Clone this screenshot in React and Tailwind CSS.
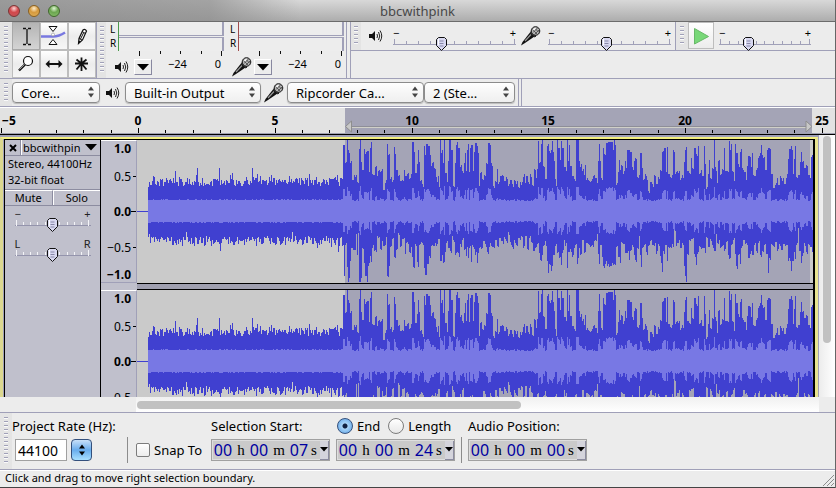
import { useState } from "react";
import clsx from "clsx";

// [column, height above zero, height below zero], in thirds of a pixel
const TOP_POINTS = [
  [0, 94], [9, 199], [15, 144], [21, 214], [24, 179], [30, 149], [36, 94], [42, 109], [51, 89], [57, 186],
  [60, 214], [63, 149], [66, 124], [72, 186], [75, 174], [84, 179], [87, 116], [90, 189], [93, 206], [96, 106],
  [102, 104], [105, 129], [111, 109], [114, 119], [120, 122], [126, 122], [129, 66], [135, 89], [141, 202],
  [144, 172], [150, 99], [156, 89], [162, 192], [165, 174], [168, 126], [174, 109], [180, 94], [186, 89],
  [192, 124], [195, 109], [201, 111], [207, 94], [213, 109], [216, 208], [222, 172], [225, 116], [231, 144],
  [234, 184], [237, 144], [240, 96], [246, 76], [252, 196], [255, 169], [258, 202], [264, 194], [270, 166],
  [273, 134], [276, 149], [282, 129], [288, 104], [291, 84], [294, 104], [297, 76], [300, 212], [303, 179],
  [309, 149], [312, 214], [315, 114], [321, 92], [324, 146], [327, 214], [333, 184], [339, 74], [345, 144],
  [348, 199], [351, 208], [354, 189], [360, 136], [366, 116], [372, 149], [375, 179], [378, 124], [381, 182],
  [384, 202], [387, 114], [390, 189], [393, 199], [399, 119], [402, 174], [405, 204], [411, 194], [414, 172],
  [417, 79], [420, 112], [426, 94], [432, 109], [438, 146], [444, 204], [450, 199], [453, 146], [456, 129],
  [459, 74], [465, 94], [471, 121], [474, 84], [480, 104], [486, 109], [492, 94], [498, 99], [504, 79],
  [510, 89], [516, 76], [522, 92], [528, 84], [534, 71], [540, 84], [549, 106], [555, 79], [558, 104],
  [564, 82], [570, 104], [576, 79], [582, 122], [588, 94], [591, 124], [594, 211], [597, 149], [603, 202],
  [606, 214], [609, 134], [615, 99], [621, 194], [624, 202], [627, 179], [633, 184], [636, 209], [639, 174],
  [642, 154], [645, 94], [648, 79], [651, 214], [654, 189], [660, 149], [663, 211], [666, 189], [672, 129],
  [678, 114], [681, 214], [684, 149], [687, 199], [690, 134], [696, 109], [702, 94], [708, 214], [714, 214],
  [717, 144], [720, 139], [726, 124], [732, 109], [735, 144], [738, 94], [744, 89], [756, 94], [759, 109],
  [765, 94], [771, 89], [774, 154], [777, 202], [780, 149], [783, 94], [789, 189], [792, 174], [798, 204],
  [804, 206], [816, 206], [819, 182], [822, 212], [825, 199], [828, 84], [834, 119], [837, 149], [840, 119],
  [843, 139], [849, 114], [855, 152], [858, 124], [861, 182], [867, 184], [870, 174], [876, 129], [882, 154],
  [888, 159], [891, 104], [897, 109], [900, 176], [903, 179], [906, 129], [909, 99], [915, 106], [921, 94],
  [924, 61], [930, 94], [936, 76], [942, 109], [948, 79], [954, 99], [960, 119], [966, 174], [972, 189],
  [978, 114], [981, 192], [984, 114], [990, 99], [996, 104], [999, 182], [1002, 179], [1005, 114], [1014, 119],
  [1020, 94], [1026, 104], [1032, 144], [1035, 182], [1038, 192], [1041, 114], [1047, 112], [1053, 154],
  [1056, 129], [1062, 189], [1068, 174], [1071, 164], [1074, 196], [1077, 114], [1083, 119], [1086, 104],
  [1092, 194], [1095, 144], [1098, 66], [1104, 109], [1107, 159], [1110, 99], [1116, 124], [1122, 214],
  [1125, 126], [1131, 89], [1134, 149], [1140, 109], [1146, 124], [1152, 189], [1155, 119], [1161, 116],
  [1167, 211], [1170, 184], [1173, 202], [1176, 114], [1182, 89], [1185, 202], [1188, 179], [1194, 134],
  [1200, 176], [1203, 186], [1206, 126], [1212, 116], [1218, 89], [1221, 134], [1224, 166], [1230, 166],
  [1233, 129], [1236, 176], [1239, 109], [1248, 124], [1254, 164], [1260, 169], [1263, 199], [1266, 166],
  [1269, 164], [1275, 126], [1281, 182], [1284, 189], [1290, 186], [1293, 109], [1299, 72], [1305, 79],
  [1311, 99], [1314, 84], [1320, 104], [1326, 94], [1332, 84], [1338, 94], [1341, 114], [1344, 152],
  [1347, 186], [1353, 194], [1356, 184], [1359, 114], [1362, 154], [1365, 196], [1368, 99], [1374, 109],
  [1380, 154], [1383, 178], [1386, 144], [1392, 126], [1398, 139], [1404, 104], [1410, 94], [1413, 164],
  [1416, 166],
];

const BOTTOM_POINTS = [
  [0, 78], [6, 101], [9, 106], [12, 194], [15, 101], [21, 161], [24, 214], [27, 201], [30, 146], [33, 106],
  [39, 121], [45, 116], [48, 72], [51, 126], [54, 61], [57, 214], [63, 201], [66, 111], [72, 156], [75, 196],
  [81, 214], [84, 161], [90, 141], [93, 151], [96, 106], [102, 121], [108, 126], [111, 81], [120, 116],
  [126, 86], [129, 106], [138, 81], [141, 196], [144, 199], [147, 164], [150, 106], [156, 81], [162, 136],
  [165, 146], [168, 116], [174, 71], [180, 106], [186, 78], [195, 126], [198, 96], [207, 126], [213, 114],
  [216, 136], [219, 166], [222, 168], [225, 106], [231, 151], [234, 166], [237, 101], [243, 96], [249, 106],
  [252, 176], [255, 191], [261, 164], [267, 136], [273, 106], [279, 101], [288, 101], [294, 86], [300, 154],
  [306, 126], [309, 158], [315, 126], [318, 91], [324, 108], [330, 126], [336, 81], [342, 96], [345, 131],
  [351, 124], [357, 144], [360, 101], [366, 86], [372, 116], [378, 131], [381, 108], [384, 146], [387, 106],
  [393, 151], [396, 106], [402, 111], [405, 126], [411, 161], [414, 126], [417, 106], [423, 111], [429, 86],
  [435, 101], [441, 124], [447, 111], [450, 101], [459, 106], [465, 91], [471, 106], [477, 86], [486, 96],
  [492, 81], [498, 96], [504, 68], [510, 96], [516, 108], [522, 91], [528, 101], [534, 86], [543, 81],
  [549, 106], [555, 76], [561, 116], [567, 81], [573, 91], [579, 121], [585, 111], [591, 96], [597, 126],
  [600, 146], [606, 136], [609, 101], [615, 91], [618, 106], [621, 156], [624, 186], [627, 161], [633, 181],
  [636, 166], [639, 126], [645, 101], [651, 126], [657, 136], [663, 164], [666, 121], [672, 86], [675, 101],
  [681, 168], [684, 126], [690, 121], [696, 136], [702, 106], [708, 96], [711, 161], [714, 136], [717, 106],
  [720, 134], [726, 86], [732, 124], [738, 96], [744, 106], [756, 106], [762, 91], [771, 66], [774, 126],
  [777, 154], [780, 106], [786, 136], [789, 171], [795, 156], [801, 164], [810, 171], [816, 156], [822, 158],
  [828, 101], [834, 141], [840, 151], [843, 96], [849, 101], [855, 131], [861, 126], [867, 146], [870, 121],
  [876, 106], [882, 126], [885, 148], [891, 114], [897, 76], [900, 126], [903, 164], [906, 106], [912, 98],
  [918, 126], [924, 106], [930, 86], [936, 106], [942, 101], [948, 126], [954, 101], [960, 131], [963, 156],
  [966, 184], [969, 126], [975, 96], [981, 151], [984, 106], [990, 114], [996, 101], [1002, 61], [1008, 101],
  [1014, 91], [1020, 106], [1026, 98], [1032, 161], [1035, 196], [1038, 214], [1041, 126], [1047, 86],
  [1056, 78], [1062, 136], [1068, 161], [1071, 126], [1077, 106], [1083, 114], [1089, 111], [1095, 124],
  [1098, 81], [1104, 106], [1110, 86], [1116, 106], [1122, 121], [1128, 71], [1131, 101], [1137, 81],
  [1140, 111], [1146, 101], [1152, 118], [1158, 94], [1164, 131], [1167, 141], [1173, 106], [1179, 86],
  [1185, 131], [1188, 168], [1194, 126], [1200, 154], [1203, 106], [1209, 86], [1215, 96], [1221, 106],
  [1224, 141], [1230, 126], [1236, 128], [1242, 101], [1248, 121], [1254, 96], [1260, 136], [1266, 121],
  [1272, 106], [1278, 126], [1284, 186], [1287, 146], [1293, 101], [1299, 106], [1305, 91], [1311, 118],
  [1317, 101], [1323, 114], [1329, 96], [1335, 101], [1341, 101], [1344, 146], [1350, 156], [1353, 181],
  [1356, 151], [1362, 126], [1365, 151], [1368, 101], [1374, 51], [1377, 121], [1383, 151], [1386, 131],
  [1392, 101], [1398, 126], [1404, 101], [1410, 106], [1416, 126],
];

const QUIET_START = 11;
const LOUD_START = 203;
const WAVE_END = 676;
const ZERO = 71;

function noise(n) {
  const v = Math.sin(n * 12.9898 + n * n * 0.173) * 43758.5453;
  return v - Math.floor(v);
}

function sample(points, col) {
  let value = points[0][1];
  for (const [x, height] of points) {
    if (x / 3 > col) break;
    value = height;
  }
  return value / 3;
}

function buildColumns() {
  const columns = [];
  for (let x = QUIET_START; x < WAVE_END; x++) {
    const a = noise(x);
    const b = noise(x + 900);
    const jitter = Math.round(noise(x + 400) * 2);
    if (x < LOUD_START) {
      const ramp = x < QUIET_START + 2 ? 4 : 0;
      const s = noise(x + 77);
      const d = noise(x + 1555);
      const spike = s > 0.97 ? 10 : s > 0.8 ? 4 : 0;
      const dip = d > 0.96 ? 8 : d < 0.08 ? -5 : 0;
      columns.push({
        x,
        up: Math.round(25 + a * 8) + spike - ramp,
        down: Math.round(25 + b * 10) + dip - ramp,
        rmsUp: 10 + (jitter > 1 ? 2 : 1),
        rmsDown: 10 + (b > 0.7 ? 2 : 1),
      });
    } else {
      const up = sample(TOP_POINTS, x - LOUD_START);
      const down = sample(BOTTOM_POINTS, x - LOUD_START);
      columns.push({
        x,
        up: Math.round(Math.min(71, up + (up > 60 ? 0 : a * 4 - 2))),
        down: Math.round(Math.min(72, down + (down > 60 ? 0 : b * 4 - 2))),
        rmsUp: Math.round(10 + Math.max(0, up - 36) * 0.36 + jitter),
        rmsDown: Math.round(10 + Math.max(0, up - 36) * 0.34 + jitter),
      });
    }
  }
  return columns;
}

const COLUMNS = buildColumns();
const PEAK_PATH = COLUMNS.map((c) => `M${c.x} ${ZERO - c.up}h1v${c.up + c.down}h-1z`).join("");
const RMS_PATH = COLUMNS.map((c) => `M${c.x} ${ZERO - c.rmsUp}h1v${c.rmsUp + c.rmsDown}h-1z`).join("");

function Grabber({ className }) {
  return (
    <div className={clsx("flex shrink-0 justify-center bg-[#e4e4e4] py-1", className)}>
      <div className="w-1 bg-[repeating-linear-gradient(to_bottom,#a0a0b8_0px,#a0a0b8_1px,#fafafa_1px,#fafafa_2px,#e4e4e4_2px,#e4e4e4_4px)]" />
    </div>
  );
}

function SpeakerIcon() {
  return (
    <svg width="14" height="14" viewBox="0 0 14 14" className="shrink-0" aria-hidden="true">
      <path d="M0 5h3l3-3v10l-3-3H0z" fill="#111" />
      <path d="M8 5q1 2 0 4M9.500 3q2.500 4 0 8M11 1.500q3.500 5.500 0 11" fill="none" stroke="#222" />
    </svg>
  );
}

function MicIcon() {
  return (
    <svg width="20" height="20" viewBox="0 0 20 20" className="shrink-0" aria-hidden="true">
      <path d="M0 19.500L1.500 16 9 6.500l4.500 4L4 17z" fill="#111" />
      <path d="M4 15l6-6.500" stroke="#999" strokeWidth="1.200" />
      <path d="M9.500 7l4 4 1.500-1-4.500-5z" fill="#555" stroke="#111" />
      <circle cx="14.500" cy="5" r="4.300" fill="#b5b5b5" stroke="#111" />
      <path d="M11.500 3.500l5 5M13 1.500l5 5M12 6.500l5-5M13.500 8.500l5-5" stroke="#444" strokeWidth=".8" />
      <path d="M12.500 4l2-2" stroke="#fff" strokeWidth="1.500" />
    </svg>
  );
}

const TOOLS = [
  {
    label: "Selection",
    icon: (
      <path
        d="M10 5.500h3M15 5.500h3M10 21.500h3M15 21.500h3M14 6v15"
        stroke="#111"
        strokeWidth="1.300"
        fill="none"
      />
    ),
  },
  {
    label: "Envelope",
    icon: (
      <>
        <path d="M0 13.500h12q6 0 12-4" stroke="#7878e0" strokeWidth="2.500" fill="none" />
        <path d="M8 3.500h8l-4 5zM8 21.500h8l-4-5z" fill="#fff" stroke="#111" />
        <circle cx="12" cy="11.500" r="1.500" fill="#fff" stroke="#999" strokeWidth=".7" />
      </>
    ),
  },
  {
    label: "Draw",
    icon: (
      <>
        <path d="M9.500 20.500l.5-5 4-8.500q2-1.500 3.500 1l-4 9z" fill="#fff" stroke="#111" strokeWidth="1.200" />
        <path d="M10 15.500l3 1.500M13 8.500l3.500 2M14.500 10l-3 6" stroke="#111" fill="none" />
        <path d="M9.500 20.500l.5-3 2 1z" fill="#111" />
      </>
    ),
  },
  {
    label: "Zoom",
    icon: (
      <>
        <circle cx="15" cy="10" r="4.500" fill="#fff" stroke="#111" strokeWidth="1.200" />
        <path d="M12 13.500L6 19.500" stroke="#111" strokeWidth="2.400" />
        <path d="M11.500 13.500L6.500 18.500" stroke="#ccc" strokeWidth=".7" />
      </>
    ),
  },
  {
    label: "Time Shift",
    icon: <path d="M4.500 13l4-4v3h9V9l4 4-4 4v-3h-9v3z" fill="#111" />,
  },
  {
    label: "Multi-Tool",
    icon: <path d="M12.500 6.500v13.500M6 12.500h13M7.500 18.500l5-6 5 6M7.500 8.500l5 4 5-4" fill="none" stroke="#111" strokeWidth="1.800" />,
  },
];

function ToolButtons() {
  const [active, setActive] = useState("Selection");
  return (
    <div className="grid shrink-0 grid-cols-3">
      {TOOLS.map((tool) => (
        <button
          key={tool.label}
          aria-label={tool.label}
          aria-pressed={active === tool.label}
          onClick={() => setActive(tool.label)}
          className={clsx(
            "h-7 w-7 border",
            active === tool.label
              ? "border-[#a8a8a8] bg-linear-to-b from-[#b4b4b4] to-[#d4d4d4]"
              : "border-[#bdbdbd] bg-linear-to-b from-white via-[#ececec] to-[#f6f6f6]",
          )}
        >
          <svg viewBox="0 0 26 26" width="26" height="26" aria-hidden="true">
            {tool.icon}
          </svg>
        </button>
      ))}
    </div>
  );
}

function Meter({ label, icon, lineClass }) {
  return (
    <div className="w-[120px]">
      <div className="flex">
        <div className="w-3 pl-1 text-[10px] leading-[14px]">
          <div>L</div>
          <div>R</div>
        </div>
        <div className={clsx("flex flex-1 flex-col gap-px border-l", lineClass)}>
          <div className="mr-0.5 h-[14px] border-r-2 border-b border-[#a0a0b8] bg-[#ededed]" />
          <div className="mr-0.5 h-[14px] border-t border-r-2 border-[#a0a0b8] bg-[#ededed]" />
        </div>
      </div>
      <div className="pl-[30px]">
        <svg width="88" height="5" className="block" aria-hidden="true">
          <path d="M3.500 0v5M24.500 0v3M44.500 0v3M65.500 0v3M85.500 0v5" stroke="#111" shapeRendering="crispEdges" />
        </svg>
      </div>
      <div className="flex items-center pl-1">
        <div className="flex w-6 justify-center">{icon}</div>
        <button
          aria-label={`${label} meter options`}
          className="flex h-4 w-[18px] items-center justify-center border border-t-white border-r-[#8888a0] border-b-[#8888a0] border-l-white"
        >
          <svg width="12" height="7" aria-hidden="true">
            <path d="M0 0h12L6 6.500z" />
          </svg>
        </button>
        <div className="flex flex-1 justify-between pr-[5px] pb-1.5 pl-4 text-[11px] leading-4">
          <span>−24</span>
          <span>0</span>
        </div>
      </div>
    </div>
  );
}

function Thumb() {
  return (
    <svg width="11" height="14" viewBox="0 0 11 14" aria-hidden="true">
      <path d="M2.500.5h6l2 2v6l-5 5-5-5v-6z" fill="#d8d8f0" stroke="#111" />
      <path d="M3.500 4h4M3.500 6.500h4M3.500 9h4" stroke="#8888a8" />
      <path d="M2.500 2v6" stroke="#fff" />
    </svg>
  );
}

function Slider({ label, low = "−", high = "+", initial, divisions = 10, className, light }) {
  const [value, setValue] = useState(initial);
  return (
    <div className={clsx("relative shrink-0", className)}>
      <div className="flex justify-between text-[11px] leading-[12px]">
        <span>{low}</span>
        <span>{high}</span>
      </div>
      <div className={clsx("flex h-1.5 justify-between border-b px-px", light ? "border-[#9494ac]" : "border-[#a0a0b8]")}>
        {Array.from({ length: divisions + 1 }, (_, i) => (
          <span
            key={i}
            className={clsx("w-px", light ? "bg-[#f4f4f8]" : "bg-[#a0a0b8]", i % divisions === 0 ? "h-1.5" : "mt-0.5 h-[3px]")}
          />
        ))}
      </div>
      <div className="pointer-events-none absolute bottom-[-6px] -ml-[5px]" style={{ left: `${value}%` }}>
        <Thumb />
      </div>
      <input
        type="range"
        aria-label={label}
        value={value}
        onChange={(e) => setValue(Number(e.target.value))}
        className="absolute inset-0 h-full w-full opacity-0"
      />
    </div>
  );
}

function DeviceSelect({ label, value, className }) {
  return (
    <div className={clsx("relative shrink-0", className)}>
      <select
        aria-label={label}
        className="block h-[21px] w-full appearance-none rounded border border-[#8c8c8c] bg-linear-to-b from-white via-[#f6f6f6] to-[#efefef] pl-2 text-[13px] leading-4 shadow-[0_1px_1px_#bbb]"
      >
        <option>{value}</option>
      </select>
      <svg className="pointer-events-none absolute top-1 right-1.5" width="6" height="12" aria-hidden="true">
        <path d="M0 4.500L3 .5l3 4zM0 7.500h6l-3 4z" fill="#444" />
      </svg>
    </div>
  );
}

function TitleBar() {
  return (
    <header className="relative flex h-[22px] items-center justify-center border-b border-[#6c6c6c] bg-[linear-gradient(to_right,#8c8c8cd0_0px,#8c8c8cb0_210px,transparent_300px),linear-gradient(to_bottom,#d8d8d8,#adadad)]">
      <div className="absolute left-2 flex gap-2">
        <button aria-label="Close" className="h-3 w-3 rounded-full border border-[#7c3434] bg-[radial-gradient(circle_at_50%_25%,#fbd5d5,#d2484c_45%,#c4555a)]" />
        <button aria-label="Minimize" className="h-3 w-3 rounded-full border border-[#8a6020] bg-[radial-gradient(circle_at_50%_25%,#fdeccc,#d69a3e_45%,#e0b25c)]" />
        <button aria-label="Zoom" className="h-3 w-3 rounded-full border border-[#40682c] bg-[radial-gradient(circle_at_50%_25%,#e0f5d5,#6ca650_45%,#8cc270)]" />
      </div>
      <h1 className="text-[13px] leading-5 text-[#484848]">bbcwithpink</h1>
    </header>
  );
}

function UpperToolbars() {
  return (
    <div className="flex h-[57px] border-b border-[#a0a0b8]">
      <div className="flex border-r border-[#a0a0b8]">
        <Grabber className="w-3" />
        <ToolButtons />
      </div>
      <div className="flex border-r border-[#a0a0b8]">
        <Grabber className="w-[9px]" />
        <Meter label="Playback" icon={<SpeakerIcon />} lineClass="border-l-[#4c9a4c]" />
        <Meter label="Recording" icon={<MicIcon />} lineClass="border-l-[#a04c4c]" />
      </div>
      <div className="ml-[3px] flex-1 border-l border-[#a0a0b8]">
        <div className="flex h-[29px] border-b border-[#a0a0b8]">
          <Grabber className="w-[10px]" />
          <div className="flex items-center border-r border-[#a0a0b8] pr-1 pl-2">
            <SpeakerIcon />
            <Slider label="Output volume" initial={39} className="ml-[10px] w-[123px]" />
            <div className="ml-[5px]">
              <MicIcon />
            </div>
            <Slider label="Input volume" initial={47} className="ml-[7px] w-[123px]" />
          </div>
          <Grabber className="w-3" />
          <button
            aria-label="Play at speed"
            className="h-[27px] w-[26px] border border-[#bdbdbd] bg-linear-to-b from-white to-[#ececec]"
          >
            <svg width="24" height="24" aria-hidden="true">
              <path d="M5.500 4.500l14 8-14 7.500z" fill="#78d878" stroke="#68b868" />
            </svg>
          </button>
          <div className="flex items-center pl-[5px]">
            <Slider label="Playback speed" initial={32} className="w-[92px]" />
          </div>
        </div>
      </div>
    </div>
  );
}

function DeviceToolbar() {
  return (
    <div className="flex h-7 border-b border-[#a0a0b8]">
      <Grabber className="w-3" />
      <div className="flex items-center border-r border-[#a0a0b8] pr-[3px]">
        <DeviceSelect label="Audio host" value="Core..." className="w-[88px]" />
        <div className="mr-[5px] ml-1.5">
          <SpeakerIcon />
        </div>
        <DeviceSelect label="Output device" value="Built-in Output" className="w-[136px]" />
        <div className="mx-[3px]">
          <MicIcon />
        </div>
        <DeviceSelect label="Input device" value="Ripcorder Ca..." className="w-[137px]" />
        <DeviceSelect label="Input channels" value="2 (Ste..." className="w-[91px]" />
      </div>
      <div className="ml-0.5 border-l border-[#a0a0b8]" />
    </div>
  );
}

const SECOND = 27.35;
const ORIGIN = 138;

function Timeline() {
  const ticks = Array.from({ length: 31 }, (_, i) => i - 5);
  return (
    <svg className="block h-7 w-full border-b border-black bg-[#e2e2e2] text-xs font-bold" role="img" aria-label="Timeline">
      <rect x="345" y="1" width="467" height="25" fill="#a4a4b6" />
      <path d="M347 19.500H810" stroke="#8e8e98" />
      <path d="M347 20.500H810" stroke="#d0d0c8" />
      <path d="M351.500 14v11l-6-5.500zM806 14v11l6-5.500z" fill="#c8c8c8" stroke="#8e8e8e" />
      {ticks.map((t) => {
        const x = Math.round(ORIGIN + t * SECOND);
        return <rect key={t} x={x} y={t % 5 === 0 ? 21 : 23} width="1" height={t % 5 === 0 ? 5 : 3} />;
      })}
      {[-5, 0, 5, 10, 15, 20, 25].map((t) => (
        <text key={t} x={t < 0 ? 9 : Math.round(ORIGIN + t * SECOND)} y="18" textAnchor="middle">
          {String(t).replace("-", "−")}
        </text>
      ))}
      <path d="M0 .5H2000" stroke="#fff" />
      <path d="M0 26.500H2000" stroke="#a0a0b0" />
    </svg>
  );
}

function TrackControls() {
  return (
    <div className="w-24 shrink-0 border-r border-black bg-[#c0c0cc] text-[11px]">
      <div className="flex h-4 border-b border-[#8c8ca0]">
        <button aria-label="Close track" className="flex w-4 items-center justify-center border-r border-[#8c8ca0]">
          <svg width="8" height="8" aria-hidden="true">
            <path d="M1 1l6 6M7 1L1 7" stroke="#000" strokeWidth="2" />
          </svg>
        </button>
        <button className="flex flex-1 items-center justify-between border-l border-white pr-[3px] pl-px leading-[14px]">
          bbcwithpin
          <svg width="12" height="7" aria-hidden="true">
            <path d="M0 0h12L6 6.500z" />
          </svg>
        </button>
      </div>
      <p className="pl-[3px] leading-4">Stereo, 44100Hz</p>
      <p className="pl-[3px] leading-4">32-bit float</p>
      <div className="mt-px grid grid-cols-2 border-t border-b border-[#8c8ca0] leading-[14px]">
        <button className="border-t border-r border-t-white border-r-[#8c8ca0]">Mute</button>
        <button className="border-t border-l border-white">Solo</button>
      </div>
      <div className="flex flex-col items-center gap-3 pt-0.5 text-[#222]">
        <Slider label="Gain" initial={49} className="w-[76px]" light />
        <Slider label="Pan" low="L" high="R" initial={49} className="w-[76px]" light />
      </div>
    </div>
  );
}

function Channel() {
  return (
    <div className="flex h-[143px]">
      <div className="flex w-9 shrink-0 flex-col border-t border-r border-b border-t-white border-r-[#a0a0b8] border-b-[#a0a0b8] bg-[#c0c0cc]">
        <svg width="35" height="141" className="overflow-visible text-xs" aria-hidden="true">
          <g textAnchor="end">
            <text x="30" y="12" className="font-bold">1.0</text>
            <text x="30" y="40">0.5</text>
            <text x="30" y="75" className="font-bold">0.0</text>
            <text x="30" y="111">−0.5</text>
            <text x="30" y="138" className="font-bold">−1.0</text>
          </g>
          <path d="M32 35.500h3M30 70.500h5M32 106.500h3" stroke="#000" shapeRendering="crispEdges" />
        </svg>
      </div>
      <svg className="h-full flex-1 bg-[#cacaca]" role="img" aria-label="Waveform" shapeRendering="crispEdges">
        <rect x="208" width="465" height="100%" fill="#a4a4b6" />
        <path d="M0 71.500h12" stroke="#4040d0" />
        <path d={PEAK_PATH} fill="#4040d0" />
        <path d={RMS_PATH} fill="#7878e4" />
      </svg>
    </div>
  );
}

function TrackPanel() {
  return (
    <main className="relative min-h-0 flex-1 overflow-hidden bg-[#ececec]">
      <div className="flex h-full">
        <div className="flex min-w-0 flex-1 border-r border-[#a0a0b8] bg-[#a0a0b8] pt-0.5">
          <div className="flex h-[308px] flex-1 border-t-2 border-r-[3px] border-l-[3px] border-[#f4f080] border-r-[#e8e490] border-l-[#dcd890] pl-px">
            <div className="flex min-w-0 flex-1 border-t border-r-2 border-l border-black">
              <TrackControls />
              <div className="min-w-0 flex-1">
                <Channel />
                <div className="flex h-[7px]">
                  <div className="w-9 bg-[#c0c0cc]" />
                  <div className="flex-1 border-y border-black bg-[#a0a0b0]" />
                </div>
                <Channel />
              </div>
            </div>
          </div>
        </div>
        <div className="flex w-4 shrink-0 justify-center bg-linear-to-r from-[#ececec] to-white pt-px">
          <div className="h-[207px] w-2 rounded-full bg-[#c1c1c1]" />
        </div>
      </div>
    </main>
  );
}

function HorizontalScrollbar() {
  return (
    <div className="flex h-[15px] pr-4 pl-[136px]">
      <div className="flex flex-1 items-center bg-linear-to-b from-[#f0f0f0] to-white pl-px">
        <div className="h-2 w-[384px] rounded-full bg-[#c1c1c1]" />
      </div>
    </div>
  );
}

function TimeField({ label, seconds }) {
  const parts = [
    ["h", "00", "w-4"],
    ["m", "00", "w-5"],
    ["s", seconds, "w-2.5"],
  ];
  return (
    <div
      role="group"
      aria-label={label}
      className="flex h-[22px] w-[119px] items-center border border-[#a0a0a0] bg-[#cacaca] pl-px font-['Liberation_Serif',serif] text-[15px] shadow-[inset_0_0_0_1px_#dedede]"
    >
      {parts.map(([unit, value, width]) => (
        <label key={unit} className="flex items-center">
          <input
            aria-label={`${label} ${unit}`}
            defaultValue={value}
            className="w-5 bg-transparent p-0 text-center font-['Noto_Sans',sans-serif] text-base leading-5 text-[#0000a0] outline-none"
          />
          <span className={clsx("flex justify-center", width)}>{unit}</span>
        </label>
      ))}
      <button
        aria-label={`${label} format`}
        className="ml-auto flex h-[19px] w-[9px] shrink-0 items-center justify-center border-r border-b border-[#8c8ca0] bg-[#d4d4dc]"
      >
        <svg width="8" height="5" aria-hidden="true">
          <path d="M0 0h8L4 4.500z" />
        </svg>
      </button>
    </div>
  );
}

function Radio({ label, defaultChecked }) {
  return (
    <label className="flex items-center gap-1">
      <input
        type="radio"
        name="range-end"
        defaultChecked={defaultChecked}
        className="h-4 w-4 appearance-none rounded-full border border-[#7c7c7c] bg-linear-to-b from-white to-[#e8e8e8] checked:border-[#34507c] checked:bg-[radial-gradient(circle,#102040_2px,#a8d4f8_3px,#78b4ec_7px)]"
      />
      {label}
    </label>
  );
}

function SelectionToolbar() {
  return (
    <div className="flex h-[58px] border-t border-b border-[#a0a0b8] text-[13px] leading-4">
      <Grabber className="w-3" />
      <div className="flex w-[108px] flex-col gap-[5px] pt-[5px]">
        <label htmlFor="rate">Project Rate (Hz):</label>
        <div className="flex gap-1 pl-[3px]">
          <input id="rate" defaultValue="44100" className="h-[22px] w-[52px] border border-[#a0a0a0] bg-white px-0.5 text-sm" />
          <button
            aria-label="Choose rate"
            className="flex h-[22px] w-[21px] items-center justify-center rounded border border-[#34507c] bg-linear-to-b from-[#c8e0f8] via-[#68acec] to-[#a8e0ff]"
          >
            <svg width="6" height="12" aria-hidden="true">
              <path d="M0 4.500L3 .5l3 4zM0 7.500h6l-3 4z" />
            </svg>
          </button>
        </div>
      </div>
      <div className="mt-6 ml-[7px] h-[26px] border-l border-[#8c8c8c]" />
      <label className="mt-[29px] ml-2 flex h-4 w-[68px] items-center gap-1">
        <input
          type="checkbox"
          className="h-3.5 w-3.5 appearance-none rounded-xs border border-[#7c7c7c] bg-linear-to-b from-white to-[#ececec]"
        />
        Snap To
      </label>
      <div className="ml-[7px] flex flex-col gap-[5px] pt-[5px]">
        <div>Selection Start:</div>
        <TimeField label="Selection start" seconds="07" />
      </div>
      <div className="ml-1.5 flex flex-col gap-[5px] pt-[5px]">
        <div className="flex gap-2 pl-px">
          <Radio label="End" defaultChecked />
          <Radio label="Length" />
        </div>
        <TimeField label="Selection end" seconds="24" />
      </div>
      <div className="mt-6 ml-1.5 h-[26px] border-l border-[#8c8c8c]" />
      <div className="ml-1.5 flex flex-col gap-[5px] pt-[5px]">
        <div>Audio Position:</div>
        <TimeField label="Audio position" seconds="00" />
      </div>
    </div>
  );
}

function StatusBar() {
  return (
    <footer className="flex h-[18px] items-start justify-between border-t border-b border-t-white border-b-[#444] pl-[5px] text-[11px] leading-[14px]">
      <span>Click and drag to move right selection boundary.</span>
      <svg width="12" height="16" aria-hidden="true">
        <path d="M0 15L11 4M4 15l7-7M8 15l3-3" stroke="#8c8c8c" />
      </svg>
    </footer>
  );
}

export default function App() {
  return (
    <div className="flex h-screen flex-col overflow-hidden border-r border-[#666] bg-[#ececec] font-['Lucida_Grande','Noto_Sans',sans-serif] text-black">
      <TitleBar />
      <UpperToolbars />
      <DeviceToolbar />
      <Timeline />
      <TrackPanel />
      <HorizontalScrollbar />
      <SelectionToolbar />
      <StatusBar />
    </div>
  );
}
